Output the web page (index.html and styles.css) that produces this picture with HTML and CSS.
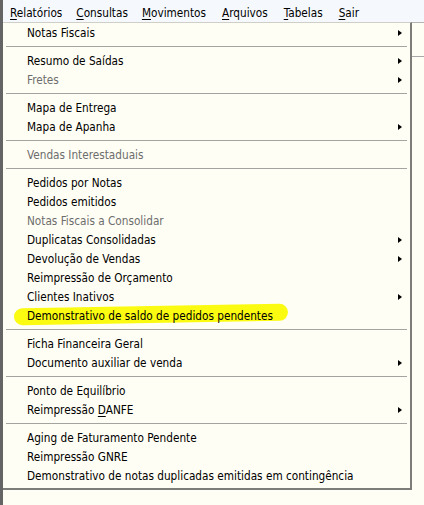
FILE: index.html
```html
<!DOCTYPE html>
<html lang="pt-BR">
<head>
<meta charset="utf-8">
<title>Relatórios</title>
<link rel="stylesheet" href="styles.css">
</head>
<body>
<div class="window">
  <div class="menubar">
    <span class="mb-item"><u>R</u>elatórios</span>
    <span class="mb-item"><u>C</u>onsultas</span>
    <span class="mb-item"><u>M</u>ovimentos</span>
    <span class="mb-item"><u>A</u>rquivos</span>
    <span class="mb-item"><u>T</u>abelas</span>
    <span class="mb-item"><u>S</u>air</span>
  </div>
  <div class="content">
    <div class="toolbar"></div>
  </div>

  <div class="popup">
    <div class="item"><span class="label">Notas Fiscais</span><span class="arrow"></span></div>
    <div class="sep"></div>
    <div class="item"><span class="label">Resumo de Saídas</span><span class="arrow"></span></div>
    <div class="item disabled"><span class="label">Fretes</span><span class="arrow"></span></div>
    <div class="sep"></div>
    <div class="item"><span class="label">Mapa de Entrega</span></div>
    <div class="item"><span class="label">Mapa de Apanha</span><span class="arrow"></span></div>
    <div class="sep"></div>
    <div class="item disabled"><span class="label">Vendas Interestaduais</span></div>
    <div class="sep"></div>
    <div class="item"><span class="label">Pedidos por Notas</span></div>
    <div class="item"><span class="label">Pedidos emitidos</span></div>
    <div class="item disabled"><span class="label">Notas Fiscais a Consolidar</span></div>
    <div class="item"><span class="label">Duplicatas Consolidadas</span><span class="arrow"></span></div>
    <div class="item"><span class="label">Devolução de Vendas</span><span class="arrow"></span></div>
    <div class="item"><span class="label">Reimpressão de Orçamento</span></div>
    <div class="item"><span class="label">Clientes Inativos</span><span class="arrow"></span></div>
    <div class="item marked"><span class="label">Demonstrativo de saldo de pedidos pendentes</span></div>
    <div class="sep"></div>
    <div class="item"><span class="label">Ficha Financeira Geral</span></div>
    <div class="item"><span class="label">Documento auxiliar de venda</span><span class="arrow"></span></div>
    <div class="sep"></div>
    <div class="item"><span class="label">Ponto de Equilíbrio</span></div>
    <div class="item"><span class="label">Reimpressão <u>D</u>ANFE</span><span class="arrow"></span></div>
    <div class="sep"></div>
    <div class="item"><span class="label">Aging de Faturamento Pendente</span></div>
    <div class="item"><span class="label">Reimpressão GNRE</span></div>
    <div class="item"><span class="label">Demonstrativo de notas duplicadas emitidas em contingência</span></div>
  </div>
</div>
</body>
</html>
```

FILE: styles.css
```css
* { box-sizing: border-box; }

html, body {
  margin: 0;
  padding: 0;
  background: #fffef4;
}

body {
  font-family: "DejaVu Sans Condensed", "DejaVu Sans", sans-serif;
  font-size: 11.7px;
  color: #000;
}

.window {
  position: relative;
  width: 424px;
  height: 505px;
  border-left: 3px solid #646464;
  overflow: hidden;
}

.menubar {
  height: 22px;
  background: #f5f8fd;
  display: flex;
  align-items: center;
  gap: 14px;
  padding-left: 7px;
  padding-top: 3px;
}

.mb-item:nth-child(n+4) { margin-left: 2px; }

.mb-item u,
.label u {
  text-decoration: underline;
  text-underline-offset: 2px;
}

.content {
  border-top: 1px solid #b4b4b4;
}

.toolbar {
  height: 34px;
  border-bottom: 1px solid #a8a8a8;
}

.popup {
  position: absolute;
  left: 0;
  top: 22px;
  width: 409px;
  background: #fffef4;
  border-top: 1px solid #cfcfc8;
  border-right: 2px solid #7c7c78;
  border-bottom: 2px solid #7c7c78;
  padding-bottom: 3px;
}

.item {
  position: relative;
  height: 19px;
  line-height: 19px;
  padding-left: 24px;
  padding-right: 8px;
  padding-top: 1px;
  display: flex;
  align-items: center;
  justify-content: space-between;
  white-space: nowrap;
}

.item.disabled { color: #6d6d6d; }

.label {
  position: relative;
  z-index: 1;
}

.arrow {
  width: 0;
  height: 0;
  border-left: 4px solid #000;
  border-top: 3.5px solid transparent;
  border-bottom: 3.5px solid transparent;
}

.sep {
  height: 9px;
  display: flex;
  align-items: center;
  padding: 0 3px;
}

.sep::after {
  content: "";
  display: block;
  flex: 1;
  height: 1px;
  background: #a3a3a0;
}

.marked::before {
  content: "";
  position: absolute;
  left: 11px;
  top: 0;
  width: 274px;
  height: 17px;
  background: #fbfb12;
  border-radius: 9px;
  transform: rotate(-1deg);
  z-index: 0;
}
```
